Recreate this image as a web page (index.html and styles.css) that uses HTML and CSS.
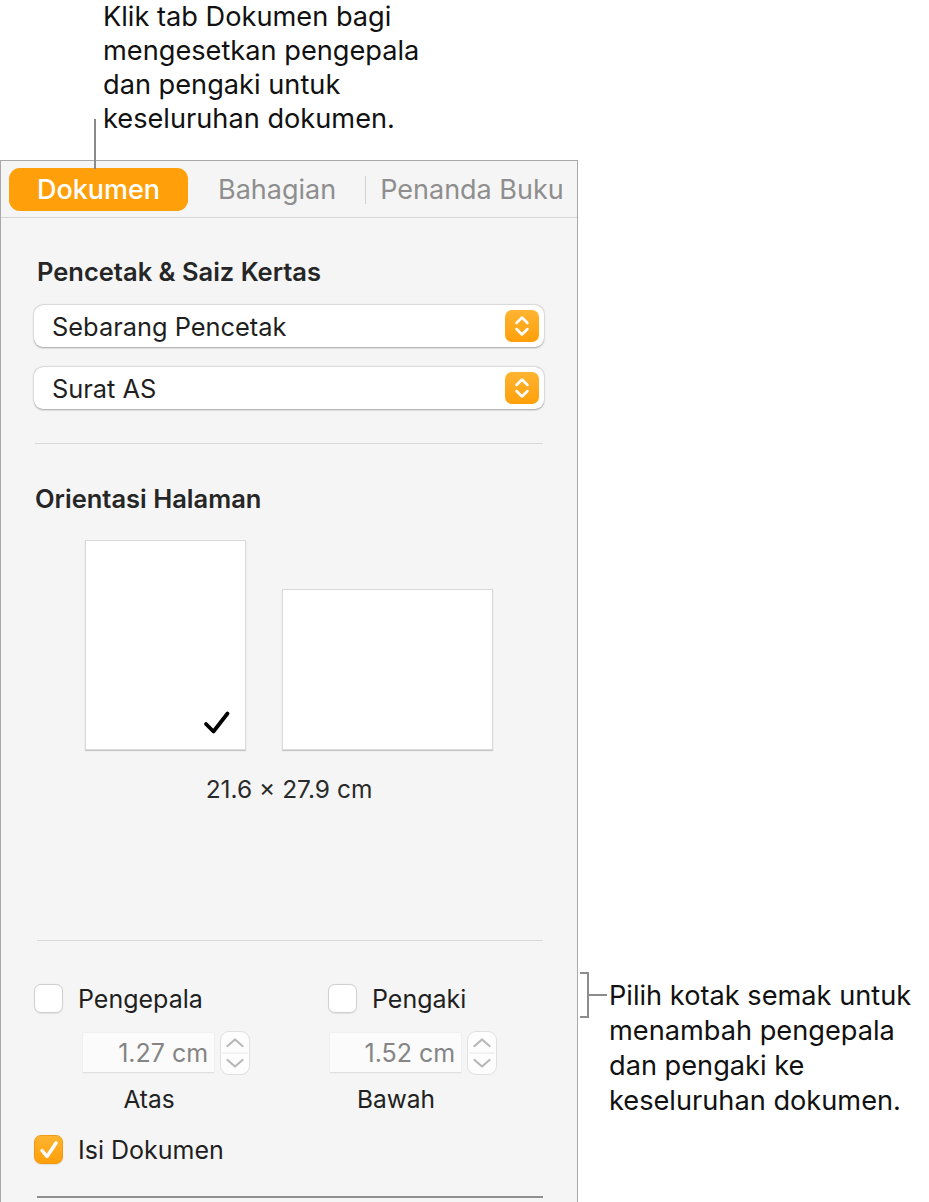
FILE: index.html
```html
<!DOCTYPE html>
<html lang="ms">
<head>
<meta charset="utf-8">
<title>Dokumen</title>
<link rel="stylesheet" href="styles.css">
</head>
<body>
<div class="page">
  <div class="top-callout">
    <p class="callout-text">Klik tab Dokumen bagi<br>mengesetkan pengepala<br>dan pengaki untuk<br>keseluruhan dokumen.</p>
  </div>
  <div class="leader"></div>
  <div class="main">
    <div class="panel">
      <div class="tabs">
        <div class="tab tab-active">Dokumen</div>
        <div class="tab tab-second">Bahagian</div>
        <div class="tab-sep"></div>
        <div class="tab tab-third">Penanda Buku</div>
      </div>
      <div class="body">
        <h2 class="section-title">Pencetak &amp; Saiz Kertas</h2>
        <div class="popup popup-first">
          <span>Sebarang Pencetak</span>
          <span class="popup-btn"><svg width="18" height="24" viewBox="0 0 18 24"><path d="M3.5 9 L9 3.5 L14.5 9 M3.5 15 L9 20.5 L14.5 15" fill="none" stroke="#fff" stroke-width="2.5" stroke-linecap="round" stroke-linejoin="round"/></svg></span>
        </div>
        <div class="popup popup-second">
          <span>Surat AS</span>
          <span class="popup-btn"><svg width="18" height="24" viewBox="0 0 18 24"><path d="M3.5 9 L9 3.5 L14.5 9 M3.5 15 L9 20.5 L14.5 15" fill="none" stroke="#fff" stroke-width="2.5" stroke-linecap="round" stroke-linejoin="round"/></svg></span>
        </div>
        <div class="divider divider-first"></div>
        <h2 class="section-title section-orient">Orientasi Halaman</h2>
        <div class="orient">
          <div class="pages">
            <div class="sheet sheet-portrait">
              <svg class="sheet-check" width="28" height="26" viewBox="0 0 28 26"><path d="M3 14 L10.5 21.5 L24.5 3.5" fill="none" stroke="#000" stroke-width="3.8" stroke-linecap="round" stroke-linejoin="round"/></svg>
            </div>
            <div class="sheet sheet-landscape"></div>
          </div>
          <div class="dims">21.6 × 27.9 cm</div>
        </div>
        <div class="divider divider-second"></div>
        <div class="options">
          <div class="opt-col opt-col-left">
            <label class="check-row"><span class="checkbox"></span><span>Pengepala</span></label>
            <div class="field-group field-group-left">
              <div class="field-line">
                <div class="field">1.27 cm</div>
                <div class="stepper"><svg width="30" height="44" viewBox="0 0 30 44"><path d="M7.5 15 L15 8.5 L22.5 15 M7.5 29 L15 35.5 L22.5 29" fill="none" stroke="#b8b8b8" stroke-width="2.2" stroke-linecap="round" stroke-linejoin="round"/><path d="M2 22 H28" stroke="#e6e6e6" stroke-width="1"/></svg></div>
              </div>
              <div class="field-label">Atas</div>
            </div>
          </div>
          <div class="opt-col opt-col-right">
            <label class="check-row"><span class="checkbox"></span><span>Pengaki</span></label>
            <div class="field-group field-group-right">
              <div class="field-line">
                <div class="field">1.52 cm</div>
                <div class="stepper"><svg width="30" height="44" viewBox="0 0 30 44"><path d="M7.5 15 L15 8.5 L22.5 15 M7.5 29 L15 35.5 L22.5 29" fill="none" stroke="#b8b8b8" stroke-width="2.2" stroke-linecap="round" stroke-linejoin="round"/><path d="M2 22 H28" stroke="#e6e6e6" stroke-width="1"/></svg></div>
              </div>
              <div class="field-label">Bawah</div>
            </div>
          </div>
        </div>
        <label class="check-row check-row-body"><span class="checkbox checkbox-on"><svg width="24" height="24" viewBox="0 0 24 24"><path d="M5 12.5 L10 18.5 L19 5" fill="none" stroke="#fff" stroke-width="3.4" stroke-linecap="round" stroke-linejoin="round"/></svg></span><span>Isi Dokumen</span></label>
        <div class="divider divider-bottom"></div>
      </div>
    </div>
    <div class="side-callout">
      <svg class="bracket" width="27" height="46" viewBox="0 0 27 46"><path d="M0 1 H8 V45 H0 M8 23 H27" fill="none" stroke="#8c8c8c" stroke-width="2"/></svg>
      <p class="callout-text side-text">Pilih kotak semak untuk<br>menambah pengepala<br>dan pengaki ke<br>keseluruhan dokumen.</p>
    </div>
  </div>
</div>
</body>
</html>
```

FILE: styles.css
```css
* { box-sizing: border-box; margin: 0; padding: 0; }
html, body { width: 929px; height: 1202px; overflow: hidden; background: #ffffff; }
body { font-family: Inter, "Noto Sans", sans-serif; color: #1f1f1f; }
.page { position: relative; width: 929px; height: 1202px; overflow: hidden; }

.top-callout { height: 160px; padding-left: 103px; }
.callout-text { font-size: 27.2px; line-height: 34px; color: #111111; }
.leader { position: absolute; left: 94px; top: 119px; width: 2px; height: 50px; background: #8a8a8a; }

.main { display: flex; align-items: flex-start; }
.panel { width: 578px; height: 1100px; background: #f5f5f5; border: 1px solid #a8a8a8; border-bottom: none; }

.tabs { display: flex; align-items: flex-start; height: 57px; padding: 7px 0 0 8px; border-bottom: 1px solid #d6d6d6; }
.tab { font-size: 27px; line-height: 43px; color: #8e8e8e; }
.tab-active { width: 179px; height: 43px; border-radius: 11px; background: #ff9f0a; color: #ffffff; font-weight: 500; text-align: center; }
.tab-second { margin-left: 30px; }
.tab-sep { width: 1px; height: 28px; background: #d2d2d2; margin-left: 29px; margin-top: 8px; }
.tab-third { margin-left: 14px; }

.body { padding: 0 33px 0 33px; }
.section-title { font-size: 25.5px; line-height: 30px; font-weight: 600; color: #262626; padding-left: 3px; margin-top: 39px; }
.popup { display: flex; align-items: center; justify-content: space-between; height: 42px; background: #ffffff; border-radius: 9px; box-shadow: 0 0.5px 2px rgba(0,0,0,0.32), 0 0 0 0.5px rgba(0,0,0,0.06); padding: 0 5px 0 18px; font-size: 25.4px; color: #1f1f1f; }
.popup-first { margin-top: 18px; }
.popup-second { margin-top: 20px; }
.popup-btn { width: 34px; height: 32px; border-radius: 7px; background: linear-gradient(#ffb431, #ff9f0a); display: flex; align-items: center; justify-content: center; }

.divider { height: 1px; background: #d9d9d9; }
.divider-first { margin-top: 34px; margin-left: 1px; margin-right: 1px; }
.section-orient { margin-top: 40px; padding-left: 1px; }

.orient { margin-left: 51px; width: 408px; }
.pages { display: flex; align-items: flex-end; gap: 36px; margin-top: 26px; }
.sheet { background: #ffffff; border: 1px solid #dadada; box-shadow: 0 1px 1px rgba(0,0,0,0.18); position: relative; }
.sheet-portrait { width: 161px; height: 210px; }
.sheet-landscape { width: 211px; height: 161px; }
.sheet-check { position: absolute; left: 117px; top: 169px; }
.dims { margin-top: 24px; text-align: center; font-size: 24.5px; line-height: 30px; color: #2a2a2a; }

.divider-second { margin-top: 136px; margin-left: 3px; margin-right: 1px; }

.options { display: flex; margin-top: 43px; }
.opt-col-left { width: 294px; }
.check-row { display: flex; align-items: center; gap: 15px; font-size: 25px; line-height: 28px; color: #1f1f1f; }
.checkbox { width: 29px; height: 29px; border-radius: 7px; background: #ffffff; border: 1px solid #d0d0d0; box-shadow: 0 0.5px 1px rgba(0,0,0,0.08); display: flex; align-items: center; justify-content: center; }
.checkbox-on { background: linear-gradient(#ffb431, #ff9f0a); border-color: #f09a10; }
.field-group { margin-top: 18px; width: 167px; }
.field-group-left { margin-left: 49px; }
.field-group-right { margin-left: 2px; }
.field-line { display: flex; align-items: center; gap: 6px; }
.field { width: 132px; height: 40px; background: #fbfbfb; border-bottom: 1px solid #dedede; box-shadow: 0 0 0 0.5px #ececec; font-size: 25px; color: #858585; text-align: right; padding-right: 6px; line-height: 40px; }
.stepper { width: 30px; height: 44px; border-radius: 9px; background: #fdfdfd; border: 1px solid #e0e0e0; display: flex; align-items: center; justify-content: center; overflow: hidden; }
.stepper svg { display: block; flex: none; }
.field-label { width: 132px; text-align: center; font-size: 24.5px; line-height: 30px; margin-top: 9px; color: #222222; }

.check-row-body { margin-top: 21px; }
.divider-bottom { margin-top: 32px; height: 2px; background: #8f8f8f; margin-left: 3px; margin-right: 1px; }

.side-callout { display: flex; align-items: flex-start; margin-top: 812px; margin-left: 2px; }
.bracket { display: block; flex: none; }
.side-text { margin-left: 2px; margin-top: 6px; line-height: 35px; }
```
